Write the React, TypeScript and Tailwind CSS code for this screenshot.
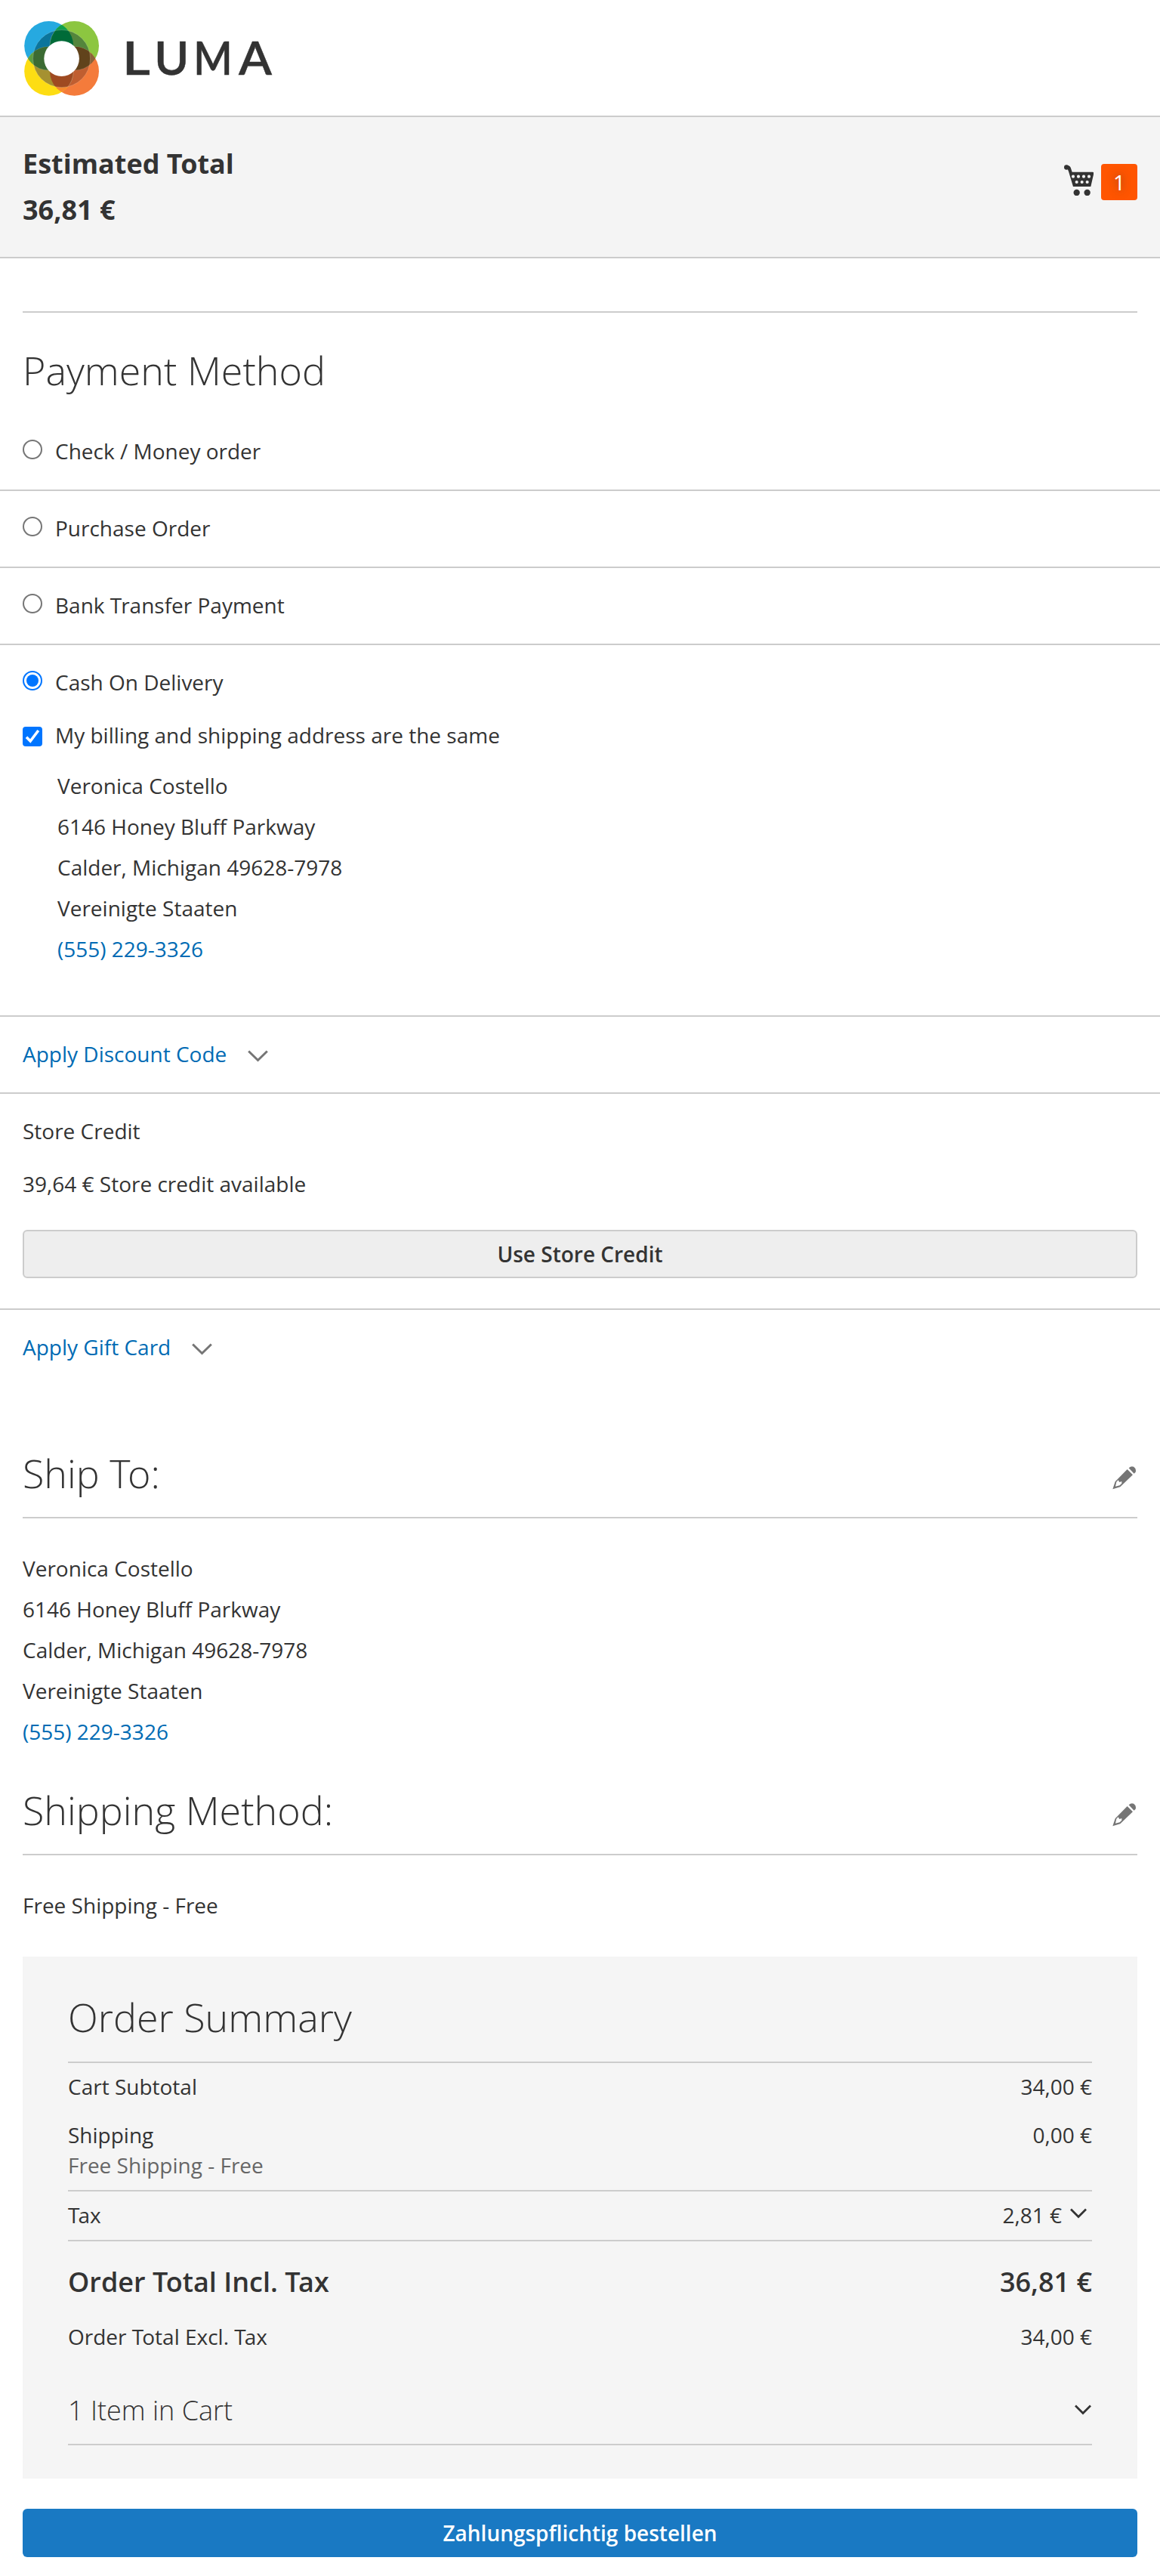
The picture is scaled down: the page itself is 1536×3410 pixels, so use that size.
import type { ReactNode } from "react";

function LumaLogo() {
  return (
    <svg width="332" height="100" viewBox="32 28 332 100" role="img" aria-label="Luma">
      <defs>
        <clipPath id="blue"><circle cx="64.7" cy="60.6" r="32.5" /></clipPath>
        <clipPath id="yellow"><circle cx="64.7" cy="94.2" r="32.5" /></clipPath>
        <clipPath id="orange"><circle cx="98.5" cy="94.2" r="32.5" /></clipPath>
        <clipPath id="ring"><circle cx="81.6" cy="77.6" r="38" /></clipPath>
      </defs>
      <circle cx="64.7" cy="60.6" r="32.5" fill="#26a9e0" />
      <circle cx="98.5" cy="60.6" r="32.5" fill="#8cc640" />
      <circle cx="98.5" cy="94.2" r="32.5" fill="#f47b3b" />
      <circle cx="64.7" cy="94.2" r="32.5" fill="#fddd13" />
      <circle cx="98.5" cy="60.6" r="32.5" fill="#0f9f4c" clipPath="url(#blue)" />
      <circle cx="98.5" cy="60.6" r="32.5" fill="#8c6239" clipPath="url(#orange)" />
      <circle cx="64.7" cy="60.6" r="32.5" fill="#5c9e43" clipPath="url(#yellow)" />
      <circle cx="64.7" cy="94.2" r="32.5" fill="#f6892f" clipPath="url(#orange)" />
      <g clipPath="url(#ring)" stroke="#ffffff" strokeOpacity="0.25" strokeWidth="0.6">
        <circle cx="64.7" cy="60.6" r="32.5" fill="#0b759c" />
        <circle cx="98.5" cy="60.6" r="32.5" fill="#54853c" />
        <circle cx="98.5" cy="94.2" r="32.5" fill="#c05e30" />
        <circle cx="64.7" cy="94.2" r="32.5" fill="#a59131" />
        <circle cx="98.5" cy="60.6" r="32.5" fill="#006b38" clipPath="url(#blue)" />
        <circle cx="98.5" cy="60.6" r="32.5" fill="#61431c" clipPath="url(#orange)" />
        <circle cx="64.7" cy="60.6" r="32.5" fill="#3b6b33" clipPath="url(#yellow)" />
        <circle cx="64.7" cy="94.2" r="32.5" fill="#9f4a21" clipPath="url(#orange)" />
      </g>
      <circle cx="81.6" cy="77.6" r="38" fill="none" stroke="#ffffff" strokeOpacity="0.3" strokeWidth="0.6" />
      <circle cx="81.6" cy="77.6" r="23.3" fill="#ffffff" />
      <g fontSize="61" fontWeight="600" fill="#333333" stroke="#333333" strokeWidth="0.5" fontFamily="Lato, sans-serif">
        <text transform="translate(161.9 98.5) scale(1.17 1)">L</text>
        <text transform="translate(204.3 98.5) scale(1.02 1)">U</text>
        <text transform="translate(256.3 98.5) scale(0.9 1)">M</text>
        <text transform="translate(316 98.5) scale(1.05 1)">A</text>
      </g>
    </svg>
  );
}

function CartIcon() {
  return (
    <svg width="39.3" height="41.3" viewBox="147 114 118 124" fill="#333333">
      <circle cx="156.5" cy="124.5" r="9.5" />
      <path d="M156 116L165 118Q171 120 173 125L179 143H261Q266 144 265 149L253 201H183L165 141L161 131Z" />
      <g fill="#f4f4f4">
        <circle cx="183" cy="161" r="6.2" />
        <circle cx="204" cy="161" r="6.2" />
        <circle cx="225" cy="161" r="6.2" />
        <circle cx="246" cy="161" r="6.2" />
        <circle cx="197" cy="183" r="6.2" />
        <circle cx="218" cy="183" r="6.2" />
        <circle cx="239" cy="183" r="6.2" />
      </g>
      <circle cx="197" cy="225" r="12.5" />
      <circle cx="239" cy="225" r="12.5" />
    </svg>
  );
}

function PencilIcon() {
  return (
    <svg width="31.3" height="30.7" viewBox="218 122 94 92" fill="#757575">
      <path
        fillRule="evenodd"
        d="M219 213L229 183L277 134L299 156L249 204ZM230 202L247 198L255 190L255 182L246 185L241 177L234 184Z"
      />
      <path d="M283 129Q292 119 303 124Q314 132 310 145L304 151Z" />
    </svg>
  );
}

function Chevron({ large = false }: { large?: boolean }) {
  return large ? (
    <svg width="27" height="16" viewBox="0 0 27 16" fill="none" stroke="#757575" strokeWidth="3">
      <path d="M1.2 1.5L13.5 13.5L25.8 1.5" />
    </svg>
  ) : (
    <svg width="22" height="14" viewBox="0 0 22 14" fill="none" stroke="#333333" strokeWidth="2.7">
      <path d="M1 1.5L11 11.5L21 1.5" />
    </svg>
  );
}

/* Capital T pulled towards the round letter that follows it. */
function T() {
  return <span className="tracking-[-0.07em]">T</span>;
}

function Radio({ checked = false }: { checked?: boolean }) {
  return (
    <span
      className={
        checked
          ? "mt-[5px] flex size-[26px] shrink-0 items-center justify-center rounded-full border-2 border-[#0075ff]"
          : "mt-[5px] size-[26px] shrink-0 rounded-full border-2 border-[#767676]"
      }
    >
      {checked && <span className="size-4 rounded-full bg-[#0075ff]" />}
    </span>
  );
}

function Method({ label, first = false }: { label: ReactNode; first?: boolean }) {
  return (
    <div
      className={
        first
          ? "flex border-b-2 border-[#ccc] px-[30px] pt-[59px] pb-[31px]"
          : "flex border-b-2 border-[#ccc] px-[30px] pt-[29px] pb-[31px]"
      }
    >
      <Radio />
      <span className="ml-[17px]">{label}</span>
    </div>
  );
}

function Address() {
  return (
    <div className="leading-[54px]">
      <div>Veronica Costello</div>
      <div>6146 Honey Bluff Parkway</div>
      <div>Calder, Michigan 49628-7978</div>
      <div>Vereinigte Staaten</div>
      <div className="text-[#006bb4]">(555) 229-3326</div>
    </div>
  );
}

function SectionTitle({ children }: { children: ReactNode }) {
  return (
    <div className="flex justify-between border-b-2 border-[#ccc] pr-[2px] pb-[30px]">
      <h2 className="text-[52px] leading-[57px] font-light">{children}</h2>
      <div className="pt-[20px]">
        <PencilIcon />
      </div>
    </div>
  );
}

export default function App() {
  return (
    <div className="h-[3410px] w-[1536px] bg-white font-['Open_Sans',sans-serif] text-[28px] leading-[40px] text-[#333]">
      <header className="h-[155px] border-b-2 border-[#ccc] pt-[28px] pl-[32px]">
        <LumaLogo />
      </header>

      <div className="flex h-[187px] justify-between border-b-2 border-[#ccc] bg-[#f4f4f4] px-[30px] pt-[36px]">
        <div className="text-[36px] leading-[51px] font-bold">
          <div>
            Estimated <T />otal
          </div>
          <div className="mt-[10px]">36,81 €</div>
        </div>
        <div className="flex pt-[26px]">
          <div className="mr-[10px] pt-px">
            <CartIcon />
          </div>
          <span className="size-12 rounded-[4px] bg-[#ff5501] text-center leading-[48px] text-white [text-shadow:0_0_12px_rgba(51,51,51,0.7)]">
            1
          </span>
        </div>
      </div>

      <main>
        <div className="mx-[30px] mt-[70px] border-t-2 border-[#ccc] pt-[47px]">
          <h1 className="text-[52px] leading-[57px] font-light">Payment Method</h1>
        </div>
        <Method label="Check / Money order" first />
        <Method label="Purchase Order" />
        <Method
          label={
            <>
              Bank <span className="tracking-[-0.04em]">T</span>ransfer Payment
            </>
          }
        />
        <div className="border-b-2 border-[#ccc] px-[30px] pt-[29px] pb-[61px]">
          <div className="flex">
            <Radio checked />
            <span className="ml-[17px]">Cash On Delivery</span>
          </div>
          <div className="mt-[30px] flex">
            <span className="mt-[9px] size-[26px] shrink-0 rounded-[4px] bg-[#0075ff]">
              <svg width="26" height="26" viewBox="0 0 26 26" fill="none" stroke="white" strokeWidth="3.6">
                <path d="M5 13.8L10.2 19L20.8 5" />
              </svg>
            </span>
            <span className="ml-[17px]">My billing and shipping address are the same</span>
          </div>
          <div className="mt-[20px] ml-[46px]">
            <Address />
          </div>
        </div>

        <div className="flex border-b-2 border-[#ccc] px-[30px] pt-[29px] pb-[31px] text-[#006bb4]">
          Apply Discount Code
          <div className="ml-[28px] flex pt-[15px]">
            <Chevron large />
          </div>
        </div>

        <div className="border-b-2 border-[#ccc] px-[30px] pt-[29px] pb-[40px]">
          <div>Store Credit</div>
          <div className="mt-[30px]">39,64 € Store credit available</div>
          <button className="mt-[41px] flex h-16 w-full items-center justify-center rounded-[6px] border-2 border-[#ccc] bg-[#eee] font-semibold">
            Use Store Credit
          </button>
        </div>

        <div className="flex px-[30px] pt-[29px] text-[#006bb4]">
          Apply Gift Card
          <div className="ml-[28px] flex pt-[15px]">
            <Chevron large />
          </div>
        </div>

        <div className="px-[30px]">
          <section className="pt-[118px]">
            <SectionTitle>
              Ship <T />o:
            </SectionTitle>
            <div className="pt-[39px]">
              <Address />
            </div>
          </section>

          <section className="pt-[48px]">
            <SectionTitle>Shipping Method:</SectionTitle>
            <div className="pt-[39px] leading-[54px]">Free Shipping - Free</div>
          </section>

          <section className="mt-[41px] bg-[#f5f5f5] px-[60px] pt-[51px] pb-[44px]">
            <h2 className="border-b-2 border-[#ccc] pb-[31px] text-[52px] leading-[57px] font-light">Order Summary</h2>
            <div className="flex justify-between pt-[11px]">
              <span>Cart Subtotal</span>
              <span>34,00 €</span>
            </div>
            <div className="flex justify-between border-b-2 border-[#ccc] pt-[24px] pb-[13px]">
              <div>
                <div>Shipping</div>
                <div className="text-[#666]">Free Shipping - Free</div>
              </div>
              <span>0,00 €</span>
            </div>
            <div className="flex justify-between border-b-2 border-[#ccc] pt-[11px] pb-[13px]">
              <span>
                <T />ax
              </span>
              <div className="flex pr-[7px]">
                <span>2,81 €</span>
                <div className="ml-[11px] flex pt-[11px]">
                  <Chevron />
                </div>
              </div>
            </div>
            <div className="flex justify-between pt-[28px] text-[36px] leading-[51px] font-semibold">
              <span>
                Order <T />otal Incl. <T />ax
              </span>
              <span>36,81 €</span>
            </div>
            <div className="flex justify-between pt-[27px]">
              <span>
                Order <T />otal Excl. <T />ax
              </span>
              <span>34,00 €</span>
            </div>
            <div className="mt-[52px] flex justify-between border-b-2 border-[#ccc] pr-px pb-[19px]">
              <span className="text-[36px] leading-[51px] font-light">1 Item in Cart</span>
              <div className="pt-[18px]">
                <Chevron />
              </div>
            </div>
          </section>

          <button className="mt-[40px] flex h-16 w-full items-center justify-center rounded-[6px] bg-[#1979c3] font-semibold text-white">
            Zahlungspflichtig bestellen
          </button>
        </div>
      </main>
    </div>
  );
}
